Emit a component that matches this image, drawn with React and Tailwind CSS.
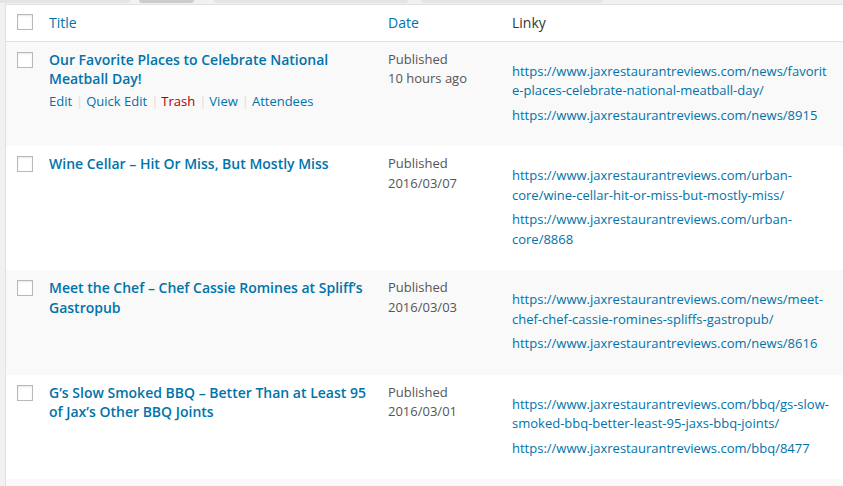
const posts = [
  {
    title: 'Our Favorite Places to Celebrate National Meatball Day!',
    date: '10 hours ago',
    links: [
      'https://www.jaxrestaurantreviews.com/news/favorite-places-celebrate-national-meatball-day/',
      'https://www.jaxrestaurantreviews.com/news/8915',
    ],
    actions: true,
  },
  {
    title: 'Wine Cellar – Hit Or Miss, But Mostly Miss',
    date: '2016/03/07',
    links: [
      'https://www.jaxrestaurantreviews.com/urban-core/wine-cellar-hit-or-miss-but-mostly-miss/',
      'https://www.jaxrestaurantreviews.com/urban-core/8868',
    ],
  },
  {
    title: 'Meet the Chef – Chef Cassie Romines at Spliff’s Gastropub',
    date: '2016/03/03',
    links: [
      'https://www.jaxrestaurantreviews.com/news/meet-chef-chef-cassie-romines-spliffs-gastropub/',
      'https://www.jaxrestaurantreviews.com/news/8616',
    ],
  },
  {
    title: 'G’s Slow Smoked BBQ – Better Than at Least 95 of Jax’s Other BBQ Joints',
    date: '2016/03/01',
    links: [
      'https://www.jaxrestaurantreviews.com/bbq/gs-slow-smoked-bbq-better-least-95-jaxs-bbq-joints/',
      'https://www.jaxrestaurantreviews.com/bbq/8477',
    ],
  },
];

function Checkbox() {
  return (
    <span className="block w-4 h-4 border border-[#b4b9be] bg-white shadow-[inset_0_1px_2px_rgba(0,0,0,0.1)]" />
  );
}

function RowActions() {
  const items = [
    { label: 'Edit', cls: 'text-[#0073aa]' },
    { label: 'Quick Edit', cls: 'text-[#0073aa]' },
    { label: 'Trash', cls: 'text-[#a00]' },
    { label: 'View', cls: 'text-[#0073aa]' },
    { label: 'Attendees', cls: 'text-[#0073aa]' },
  ];
  return (
    <div className="pt-[3px] text-[13px] leading-[19.5px]">
      {items.map((it, i) => (
        <span key={it.label}>
          {i > 0 && <span className="text-[#ddd] ml-[4px] mr-[3px]">|</span>}
          <span className={it.cls}>{it.label}</span>
        </span>
      ))}
    </div>
  );
}

export default function App() {
  return (
    <div className="min-h-[486px] bg-[#f1f1f1] font-['Open_Sans',sans-serif] overflow-hidden">
      {/* bottoms of the buttons above the table */}
      <div className="flex h-[4px]">
        <div className="w-[130px] h-[3px] bg-[#e4e4e4] rounded-br-[3px]" />
        <div className="ml-[9px] w-[55px] h-[3px] bg-[#cccccc] rounded-b-[3px]" />
        <div className="ml-[20px] w-[194px] h-[3px] bg-[#e4e4e4] rounded-b-[3px]" />
        <div className="ml-[13px] w-[182px] h-[3px] bg-[#e4e4e4] rounded-b-[3px]" />
      </div>

      <div className="ml-[5px] border-l border-t border-[#e1e1e1] bg-white">
        {/* header */}
        <div className="flex border-b border-[#e1e1e1] text-[14px] leading-[19.6px]">
          <div className="w-[33px] shrink-0 pt-[9px] pl-[11px]">
            <Checkbox />
          </div>
          <div className="w-[339px] shrink-0 px-[10px] py-[8px] text-[#0073aa]">Title</div>
          <div className="w-[124px] shrink-0 px-[10px] py-[8px] text-[#0073aa]">Date</div>
          <div className="flex-1 pl-[10px] py-[8px] text-[#32373c]">Linky</div>
        </div>

        {posts.map((p, idx) => (
          <div key={p.title} className={`flex ${idx % 2 === 0 ? 'bg-[#f9f9f9]' : 'bg-white'}`}>
            <div className="w-[33px] shrink-0 pt-[10px] pl-[11px]">
              <Checkbox />
            </div>
            <div className="w-[339px] shrink-0 px-[10px] py-[8px]">
              <div className="text-[14px] leading-[19.6px] font-semibold text-[#0073aa]">{p.title}</div>
              {p.actions && <RowActions />}
            </div>
            <div className="w-[124px] shrink-0 px-[10px] py-[8px] text-[13px] leading-[19.5px] text-[#555]">
              <div>Published</div>
              <div>{p.date}</div>
            </div>
            <div className="flex-1 min-w-0 pl-[10px] pr-[11px] pt-[8px] pb-[21px] text-[13px] leading-[19.5px] text-[#0073aa] break-words">
              <p className="mt-[12px]">{p.links[0]}</p>
              <p className="mt-[5px]">{p.links[1]}</p>
            </div>
          </div>
        ))}
        <div className="h-[40px] bg-[#f9f9f9]" />
      </div>
    </div>
  );
}
